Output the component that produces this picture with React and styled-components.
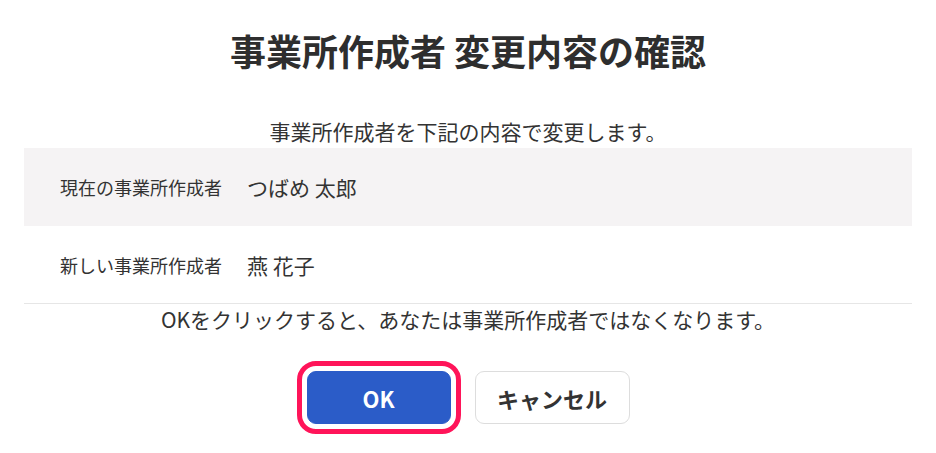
import styled, { createGlobalStyle } from "styled-components";

const GlobalStyle = createGlobalStyle`
    html, body {
        margin: 0;
        padding: 0;
        background: #ffffff;
    }
    body {
        font-family: "Noto Sans CJK JP", "Noto Sans", sans-serif;
        color: #333333;
    }
`;

const SDialog = styled.div`
    width: 936px;
    height: 453px;
    box-sizing: border-box;
    padding: 24px 24px 0;
    display: flex;
    flex-direction: column;
    align-items: center;
`;

const STitle = styled.h1`
    margin: 0;
    font-size: 36px;
    font-weight: 700;
    line-height: 52px;
    color: #2e2e2e;
`;

const SLead = styled.p`
    margin: 41px 0 3px;
    font-size: 21px;
    line-height: 28px;
`;

const STable = styled.dl`
    width: 100%;
    margin: 0;
    border-bottom: 1px solid #e6e6e6;
`;

const SRow = styled.div`
    height: ${(p) => (p.$shaded ? "78px" : "77px")};
    display: flex;
    align-items: center;
    padding-left: 36px;
    background: ${(p) => (p.$shaded ? "#f5f3f4" : "#ffffff")};
`;

const SLabel = styled.dt`
    width: 187px;
    font-size: 18px;
`;

const SValue = styled.dd`
    margin: 0;
    font-size: 21px;
`;

const SNote = styled.p`
    margin: 1px 0 0;
    font-size: 21px;
    line-height: 28px;
`;

const SActions = styled.div`
    margin-top: 38px;
    display: flex;
    gap: 24px;
`;

const SButton = styled.button`
    height: 53px;
    min-width: ${(p) => (p.$primary ? "144px" : "155px")};
    border-radius: 9px;
    font-family: inherit;
    font-size: 22px;
    font-weight: 700;
    cursor: pointer;
    border: 1px solid ${(p) => (p.$primary ? "#2b5cc8" : "#dddddd")};
    background: ${(p) => (p.$primary ? "#2b5cc8" : "#ffffff")};
    color: ${(p) => (p.$primary ? "#ffffff" : "#333333")};
    outline: ${(p) => (p.$focused ? "5px solid #ff1459" : "none")};
    outline-offset: 5px;
`;

function App() {
    return (
        <SDialog>
            <GlobalStyle />
            <STitle>事業所作成者 変更内容の確認</STitle>
            <SLead>事業所作成者を下記の内容で変更します。</SLead>
            <STable>
                <SRow $shaded>
                    <SLabel>現在の事業所作成者</SLabel>
                    <SValue>つばめ 太郎</SValue>
                </SRow>
                <SRow>
                    <SLabel>新しい事業所作成者</SLabel>
                    <SValue>燕 花子</SValue>
                </SRow>
            </STable>
            <SNote>OKをクリックすると、あなたは事業所作成者ではなくなります。</SNote>
            <SActions>
                <SButton $primary $focused>OK</SButton>
                <SButton>キャンセル</SButton>
            </SActions>
        </SDialog>
    );
}

export default App;
